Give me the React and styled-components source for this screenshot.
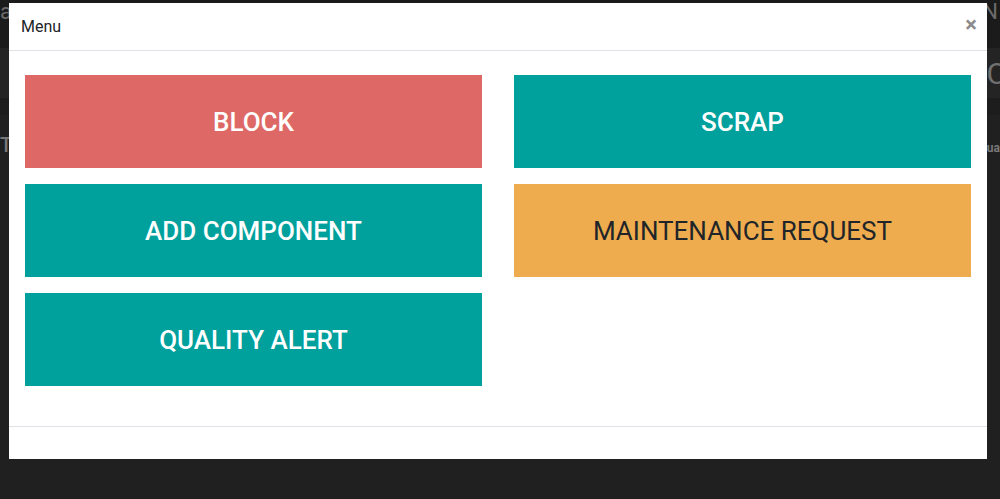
import styled, { createGlobalStyle } from "styled-components";

const GlobalStyle = createGlobalStyle`
  html, body {
    margin: 0;
    padding: 0;
    background: #1f1f1f;
    font-family: Roboto, "Liberation Sans", sans-serif;
  }
  #root {
    height: 499px;
  }
`;

const Page = styled.div`
  position: relative;
  width: 1000px;
  height: 499px;
  overflow: hidden;
  background: #1f1f1f;
  display: flex;
  flex-direction: column;
`;

const TopBar = styled.div`
  height: 48px;
  background: #1b1b1b;
  display: flex;
  justify-content: space-between;
  align-items: flex-start;
  color: #6b6b6b;
  font-size: 22px;
  line-height: 44px;
`;

const Crumb = styled.span`
  margin-top: -10px;
  padding: 0 ${(p) => p.pad || 0}px;
`;

const ControlPanel = styled.div`
  height: 50px;
  background: ${(p) => p.bg};
  display: flex;
  justify-content: space-between;
  align-items: center;
  color: #707070;
  font-size: 30px;
`;

const SubBar = styled.div`
  height: 17px;
  background: #1d1d1d;
`;

const Content = styled.div`
  flex: 1;
  background: #202020;
  display: flex;
  justify-content: space-between;
  padding-top: 18px;
  color: #777;
  font-size: 20px;
  font-weight: 500;
`;

const Small = styled.span`
  font-size: 12px;
  font-weight: 700;
  color: #7a7a7a;
  margin-top: 8px;
`;

const Modal = styled.div`
  position: absolute;
  top: 3px;
  left: 9px;
  width: 978px;
  height: 456px;
  background: #fff;
  display: flex;
  flex-direction: column;
`;

const Header = styled.div`
  height: 48px;
  box-sizing: border-box;
  border-bottom: 1px solid #dee2e6;
  display: flex;
  align-items: center;
  justify-content: space-between;
  padding: 0 10px 0 12px;
`;

const Title = styled.h4`
  margin: 0;
  font-size: 16px;
  font-weight: 400;
  color: #212529;
`;

const Close = styled.button`
  border: none;
  background: none;
  padding: 0;
  font-family: Roboto, sans-serif;
  font-size: 22px;
  font-weight: 700;
  color: #8c8c8c;
  line-height: 1;
  margin-top: -4px;
`;

const Body = styled.div`
  flex: 1;
  padding: 24px 16px 40px;
  display: grid;
  grid-template-columns: 1fr 1fr;
  grid-auto-rows: 93px;
  column-gap: 32px;
  row-gap: 16px;
`;

const ActionButton = styled.button`
  border: none;
  margin: 0;
  background: ${(p) => p.bg};
  color: ${(p) => (p.dark ? "#212529" : "#fff")};
  font-family: Roboto, "Liberation Sans", sans-serif;
  font-size: 26px;
  font-weight: ${(p) => (p.dark ? 400 : 500)};
  text-transform: uppercase;
  cursor: pointer;
`;

const Footer = styled.div`
  height: 33px;
  box-sizing: border-box;
  border-top: 1px solid #dee2e6;
`;

const actions = [
  { label: "Block", bg: "#dd6865" },
  { label: "Scrap", bg: "#00a09d" },
  { label: "Add Component", bg: "#00a09d" },
  { label: "Maintenance Request", bg: "#efac4e", dark: true },
  { label: "Quality Alert", bg: "#00a09d" },
];

export default function App() {
  return (
    <>
      <GlobalStyle />
      <Page>
        <TopBar>
          <Crumb>a</Crumb>
          <Crumb pad={2}>/N</Crumb>
        </TopBar>
        <ControlPanel bg="#242424">
          <span />
          <span style={{ marginRight: -6 }}>C</span>
        </ControlPanel>
        <SubBar />
        <Content>
          <span>T</span>
          <Small>ua</Small>
        </Content>

        <Modal>
          <Header>
            <Title>Menu</Title>
            <Close>×</Close>
          </Header>
          <Body>
            {actions.map((a) => (
              <ActionButton key={a.label} bg={a.bg} dark={a.dark}>
                {a.label}
              </ActionButton>
            ))}
          </Body>
          <Footer />
        </Modal>
      </Page>
    </>
  );
}
